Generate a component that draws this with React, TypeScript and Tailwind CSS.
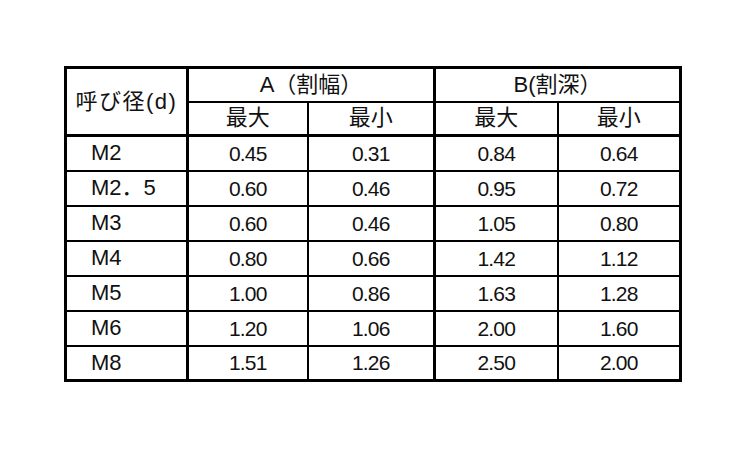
const rows = [
  ["M2", "0.45", "0.31", "0.84", "0.64"],
  ["M2．5", "0.60", "0.46", "0.95", "0.72"],
  ["M3", "0.60", "0.46", "1.05", "0.80"],
  ["M4", "0.80", "0.66", "1.42", "1.12"],
  ["M5", "1.00", "0.86", "1.63", "1.28"],
  ["M6", "1.20", "1.06", "2.00", "1.60"],
  ["M8", "1.51", "1.26", "2.50", "2.00"],
];

const App = () => {
  return (
    <div
      className="w-[750px] h-[450px] bg-white pt-[66px] pl-[64px] text-[#111] text-[21px] leading-none"
      style={{ fontFamily: '"Liberation Sans", "Noto Sans CJK JP", sans-serif' }}
    >
      <table className="table-fixed border-collapse w-[618px] border-[3px] border-black">
        <colgroup>
          <col className="w-[122px]" />
          <col className="w-[120px]" />
          <col className="w-[127px]" />
          <col className="w-[123px]" />
          <col className="w-[123px]" />
        </colgroup>
        <thead className="text-[22px]">
          <tr className="h-[34px]">
            <th
              rowSpan={2}
              className="border-r-[3px] border-b-[3px] border-black font-normal text-center tracking-[1.5px]"
            >
              呼び径(d)
            </th>
            <th colSpan={2} className="border-r-[3px] border-b-2 border-black font-normal">
              A（割幅）
            </th>
            <th colSpan={2} className="border-b-2 border-black font-normal">
              B(割深）
            </th>
          </tr>
          <tr className="h-[34px]">
            <th className="border-r-2 border-b-[3px] border-black font-normal">最大</th>
            <th className="border-r-[3px] border-b-[3px] border-black font-normal">最小</th>
            <th className="border-r-2 border-b-[3px] border-black font-normal">最大</th>
            <th className="border-b-[3px] border-black font-normal">最小</th>
          </tr>
        </thead>
        <tbody>
          {rows.map((r) => (
            <tr key={r[0]} className="h-[35px]">
              <td className="border-r-[3px] border-b-2 border-black pl-[24px] text-left text-[22px]">
                {r[0]}
              </td>
              <td className="border-r-2 border-b-2 border-black text-center tracking-[-0.8px]">{r[1]}</td>
              <td className="border-r-[3px] border-b-2 border-black text-center tracking-[-0.8px]">{r[2]}</td>
              <td className="border-r-2 border-b-2 border-black text-center tracking-[-0.8px]">{r[3]}</td>
              <td className="border-b-2 border-black text-center tracking-[-0.8px]">{r[4]}</td>
            </tr>
          ))}
        </tbody>
      </table>
    </div>
  );
};

export default App;
